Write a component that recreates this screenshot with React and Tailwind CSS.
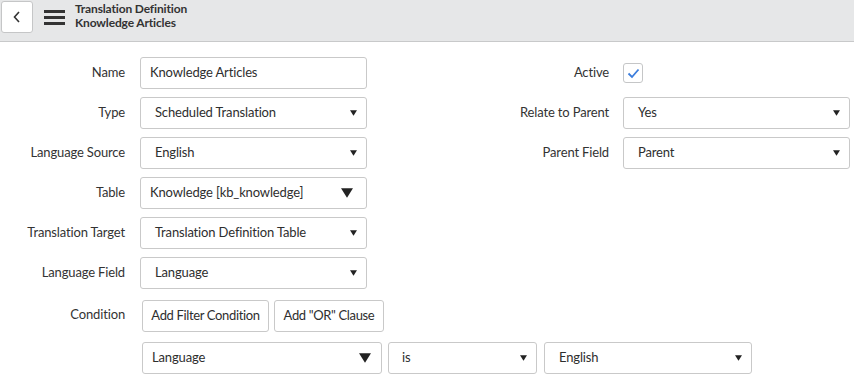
import React from 'react';

const Arrow = ({ big }) => (
  <svg className={big ? 'w-[12px] h-[10px]' : 'w-[7px] h-[6px]'} viewBox="0 0 10 8">
    <path d="M0 0h10L5 8z" fill="#222" />
  </svg>
);

const Select = ({ value, width, big, pad = 'pl-[14px]', arrowPad = 'pr-[9px]' }) => (
  <div className={`${width} h-[32px] flex items-center justify-between border border-[#c9c9c9] rounded-[3px] bg-white ${pad} ${arrowPad}`}>
    <span>{value}</span>
    <Arrow big={big} />
  </div>
);

const Label = ({ children, w = 'w-[125px]' }) => (
  <div className={`${w} text-right text-[#333] shrink-0`}>{children}</div>
);

const App = () => {
  const left = [
    { label: 'Name', value: 'Knowledge Articles', input: true },
    { label: 'Type', value: 'Scheduled Translation' },
    { label: 'Language Source', value: 'English' },
    { label: 'Table', value: 'Knowledge [kb_knowledge]', big: true },
    { label: 'Translation Target', value: 'Translation Definition Table' },
    { label: 'Language Field', value: 'Language' },
  ];

  return (
    <div className="w-[854px] h-[378px] bg-white overflow-hidden text-[13px] tracking-[-0.15px] text-[#2e2e2e] font-['Lato',sans-serif]">
      {/* header */}
      <div className="h-[42px] bg-[#e6e7e8] border-b border-[#c8c9ca] flex items-start">
        <div className="ml-[1px] mt-[1px] w-[32px] h-[32px] bg-white border border-[#c5c6c7] rounded-[3px] flex items-center justify-center">
          <svg className="w-[10px] h-[14px]" viewBox="0 0 10 14" fill="none" stroke="#333" strokeWidth="1.6">
            <path d="M7 2L2.5 7L7 12" />
          </svg>
        </div>
        <div className="ml-[11px] mt-[10px] w-[21px] flex flex-col gap-[3px]">
          <div className="h-[3px] bg-[#333]" />
          <div className="h-[3px] bg-[#333]" />
          <div className="h-[3px] bg-[#333]" />
        </div>
        <div className="ml-[10px] mt-[2px] text-[12px] font-bold leading-[14px] text-[#333]">
          <div>Translation Definition</div>
          <div>Knowledge Articles</div>
        </div>
      </div>

      {/* form */}
      <div className="pt-[15px] flex">
        <div className="flex flex-col gap-[8px]">
          {left.map((r) => (
            <div key={r.label} className="flex items-center gap-[15px]">
              <Label>{r.label}</Label>
              {r.input ? (
                <div className="w-[227px] h-[32px] flex items-center border border-[#c9c9c9] rounded-[3px] pl-[9px]">{r.value}</div>
              ) : (
                <Select value={r.value} width="w-[227px]" big={r.big} pad={r.big ? 'pl-[9px]' : 'pl-[14px]'} arrowPad={r.big ? 'pr-[13px]' : 'pr-[9px]'} />
              )}
            </div>
          ))}
        </div>

        <div className="ml-[113px] flex flex-col gap-[8px]">
          <div className="h-[32px] flex items-center gap-[14px]">
            <Label w="w-[129px]">Active</Label>
            <div className="w-[20px] h-[20px] border border-[#c5c6c7] rounded-[3px] flex items-center justify-center">
              <svg className="w-[13px] h-[11px]" viewBox="0 0 13 11" fill="none" stroke="#3b7ddd" strokeWidth="1.8">
                <path d="M1.5 5.5L5 9L11.5 1.5" />
              </svg>
            </div>
          </div>
          <div className="flex items-center gap-[14px]">
            <Label w="w-[129px]">Relate to Parent</Label>
            <Select value="Yes" width="w-[227px]" />
          </div>
          <div className="flex items-center gap-[14px]">
            <Label w="w-[129px]">Parent Field</Label>
            <Select value="Parent" width="w-[227px]" />
          </div>
        </div>
      </div>

      {/* condition */}
      <div className="mt-[11px] flex items-start gap-[17px]">
        <Label>
          <div className="mt-[5px]">Condition</div>
        </Label>
        <div className="flex flex-col gap-[10px]">
          <div className="flex gap-[5px]">
            <button className="w-[127px] h-[32px] border border-[#c9c9c9] rounded-[3px] bg-white tracking-[-0.35px] whitespace-nowrap">Add Filter Condition</button>
            <button className="w-[110px] h-[32px] border border-[#c9c9c9] rounded-[3px] bg-white tracking-[-0.35px] whitespace-nowrap">Add "OR" Clause</button>
          </div>
          <div className="flex">
            <Select value="Language" width="w-[240px]" big pad="pl-[9px]" arrowPad="pr-[10px]" />
            <div className="ml-[6px]">
              <Select value="is" width="w-[149px]" pad="pl-[13px]" />
            </div>
            <div className="ml-[7px]">
              <Select value="English" width="w-[208px]" pad="pl-[14px]" />
            </div>
          </div>
        </div>
      </div>
    </div>
  );
};

export default App;
